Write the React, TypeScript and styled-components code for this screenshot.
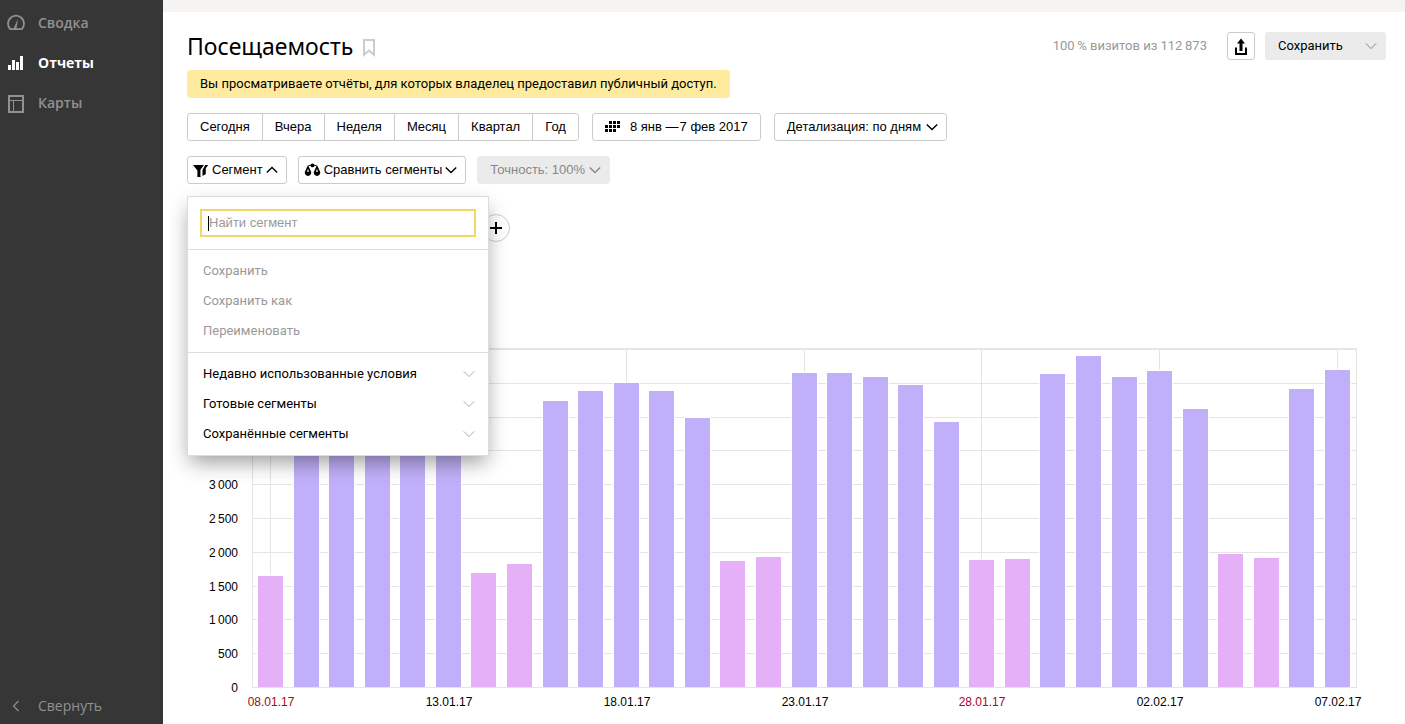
import React, { useLayoutEffect, useRef, useState } from "react";
import styled, { createGlobalStyle, css } from "styled-components";

const uiFont = `"Liberation Sans", Arial, sans-serif`;
const textFont = `Roboto, "Noto Sans", sans-serif`;
const headFont = `"Noto Sans", "Open Sans", sans-serif`;
const navFont = `"Open Sans", "Noto Sans", sans-serif`;

const GlobalStyle = createGlobalStyle`
  *, *::before, *::after { box-sizing: border-box; }
  body { margin: 0; background: #fff; color: #000; font: 13px/16px ${textFont}; }
  button, input, select { font: inherit; color: inherit; margin: 0; }
`;

const Page = styled.div`
  display: flex;
  min-height: 100vh;
`;

const Sidebar = styled.nav`
  flex: 0 0 163px;
  display: flex;
  flex-direction: column;
  padding: 3px 0;
  background: #363636;
`;

const navItem = css<{ $active?: boolean }>`
  display: flex;
  align-items: center;
  gap: 12px;
  height: 40px;
  padding: 0 6px;
  border: 0;
  background: none;
  color: ${(p) => (p.$active ? "#fff" : "#919191")};
  font-family: ${navFont};
  font-size: 14px;
  font-weight: ${(p) => (p.$active ? 700 : 600)};
  text-decoration: none;
  svg { flex: 0 0 20px; }
`;

const NavLink = styled.a<{ $active?: boolean }>`${navItem}`;
const CollapseButton = styled.button<{ $active?: boolean }>`
  ${navItem}
  margin-top: auto;
  height: 30px;
  font-weight: 400;
`;

const Main = styled.main`
  flex: 1;
  min-width: 0;
  border-top: 12px solid #f5f4f2;
  padding: 20px 19px 0 24px;
`;

const Header = styled.header`
  display: flex;
  align-items: center;
  gap: 10px;
  height: 28px;
`;

const Title = styled.h1`
  margin: 0;
  font-family: ${headFont};
  font-size: 23px;
  line-height: 28px;
  font-weight: 400;
`;

const IconButton = styled.button`
  display: flex;
  align-items: center;
  justify-content: center;
  width: 28px;
  height: 28px;
  padding: 0;
  border: 1px solid #ccc;
  border-radius: 3px;
  background: #fff;
`;

const BookmarkButton = styled.button`
  display: flex;
  padding: 4px 0 0;
  border: 0;
  background: none;
`;

const Visits = styled.span`
  margin-left: auto;
  padding-right: 10px;
  color: #999;
`;

const SaveButton = styled.button`
  display: flex;
  align-items: center;
  justify-content: space-between;
  width: 121px;
  height: 28px;
  padding: 0 9px 0 13px;
  border: 0;
  border-radius: 3px;
  background: #ebebeb;
  color: #000;
`;

const Notice = styled.p`
  width: fit-content;
  margin: 10px 0 15px;
  padding: 6px 13px;
  border-radius: 3px;
  background: #ffeba0;
  line-height: 16px;
`;

const Toolbar = styled.div`
  display: flex;
  align-items: center;
  gap: ${(p: { $gap: number }) => p.$gap}px;
  margin-bottom: 15px;
  font-family: ${uiFont};
`;

const ButtonGroup = styled.div`
  display: flex;
  border: 1px solid #ccc;
  border-radius: 3px;
`;

const GroupButton = styled.button`
  height: 26px;
  padding: 0 12px;
  border: 0;
  background: none;
  & + & { border-left: 1px solid #ccc; }
`;

const ToolButton = styled.button<{ $wide?: boolean }>`
  display: flex;
  align-items: center;
  gap: ${(p) => (p.$wide ? 9 : 3)}px;
  height: 28px;
  padding: 0 ${(p) => (p.$wide ? 12 : 8)}px 0 ${(p) => (p.$wide ? 12 : 5)}px;
  border: 1px solid #ccc;
  border-radius: 3px;
  background: #fff;
  white-space: nowrap;
`;

const SelectBox = styled.label`
  position: relative;
  display: flex;
  align-items: center;
  > svg {
    position: absolute;
    right: 9px;
    pointer-events: none;
  }
`;

const Select = styled.select`
  appearance: none;
  height: 28px;
  padding: 0 24px 0 12px;
  border: 1px solid #ccc;
  border-radius: 3px;
  background: #fff;
  &:disabled {
    border-color: #ebebeb;
    background: #ebebeb;
    color: #888;
    opacity: 1;
  }
`;

const MenuAnchor = styled.div`
  position: relative;
`;

const Menu = styled.div`
  position: absolute;
  z-index: 2;
  top: calc(100% + 12px);
  left: 0;
  width: 302px;
  border: 1px solid #ddd;
  background: #fff;
  box-shadow: 0 9px 20px -3px rgba(0, 0, 0, 0.4);
  font-family: ${textFont};
`;

const SearchBox = styled.label`
  position: relative;
  display: block;
  padding: 12px;
`;

const SearchInput = styled.input`
  display: block;
  width: 100%;
  height: 28px;
  padding: 0 7px 2px;
  border: 2px solid #f3d766;
  outline: none;
  background: #fff;
  caret-color: transparent;
  font-family: ${uiFont};
  &::placeholder { color: #999; opacity: 1; }
`;

const Caret = styled.span`
  position: absolute;
  top: 19px;
  left: 20px;
  width: 1px;
  height: 15px;
  background: #000;
`;

const MenuSection = styled.div`
  padding: 6px 0;
  border-top: 1px solid #ddd;
`;

const MenuItem = styled.button`
  display: flex;
  align-items: center;
  justify-content: space-between;
  width: 100%;
  height: 30px;
  padding: 0 13px 0 15px;
  border: 0;
  background: none;
  &:disabled { color: #999; }
`;

const AddRow = styled.div`
  display: flex;
  padding: 15px 0 100px 295px;
`;

const AddButton = styled(IconButton)`
  border-radius: 50%;
`;

const ChartFrame = styled.div`
  display: flex;
  padding: 0 29px 0 0;
  font-family: ${uiFont};
  font-size: 12px;
`;

const YAxis = styled.div`
  display: flex;
  flex-direction: column;
  justify-content: space-between;
  flex: 0 0 65px;
  height: 354px;
  padding-right: 14px;
  text-align: right;
`;

const PlotArea = styled.div`
  flex: 1;
  min-width: 0;
  padding-top: 7px;
  svg { display: block; overflow: visible; }
`;

type ChevronProps = { color?: string; up?: boolean; thin?: boolean };

const Chevron = ({ color = "#000", up, thin }: ChevronProps) => (
  <svg width="12" height="8" viewBox="0 0 12 8" fill="none" stroke={color} strokeWidth={thin ? 1 : 1.4} aria-hidden="true">
    <path d={up ? "M.8 6.6 6 1.4l5.2 5.2" : "M.8 1.4 6 6.6l5.2-5.2"} />
  </svg>
);

const GaugeIcon = () => (
  <svg width="20" height="20" viewBox="0 0 20 20" fill="none" stroke="#919191" strokeWidth="1.8" aria-hidden="true">
    <path d="M4.2 16.2A8 8 0 1 1 15.8 16.2Z" />
    <path d="m12 6-3.9 8.2v2h2.2Z" fill="#919191" stroke="none" />
  </svg>
);

const BarsIcon = () => (
  <svg width="20" height="20" viewBox="0 0 20 20" fill="#fff" aria-hidden="true">
    <path d="M2 12h3v5H2zM6 7h3v10H6zM10 9h3v8h-3zM14 3h3v14h-3z" />
  </svg>
);

const MapIcon = () => (
  <svg width="20" height="20" viewBox="0 0 20 20" fill="none" stroke="#919191" aria-hidden="true">
    <path d="M3 3h14v16H3z" strokeWidth="2" />
    <path d="M3 7.5h14M7.5 7.5V19" />
  </svg>
);

const BackIcon = () => (
  <svg width="20" height="20" viewBox="0 0 20 20" fill="none" stroke="#919191" strokeWidth="1.2" aria-hidden="true">
    <path d="m12.5 5-5 5 5 5" />
  </svg>
);

const BookmarkIcon = () => (
  <svg width="12" height="18" viewBox="0 0 12 18" fill="none" stroke="#ccc" strokeWidth="2" aria-hidden="true">
    <path d="M1 1h10v14.8l-5-4.3-5 4.3Z" />
  </svg>
);

const ShareIcon = () => (
  <svg width="14" height="18" viewBox="0 0 14 18" aria-hidden="true">
    <path d="M2 10.5V17h10v-6.5" fill="none" stroke="#000" strokeWidth="2" />
    <path d="M7 1.5 3 6.5h2.5V14h3V6.5H11Z" />
  </svg>
);

const CalendarIcon = () => (
  <svg width="16" height="12" viewBox="0 0 16 12" aria-hidden="true">
    <path d="M4 0h3v3H4zM8 0h3v3H8zM12 0h3v3h-3zM0 4h3v3H0zM4 4h3v3H4zM8 4h3v3H8zM12 4h3v3h-3zM0 8h3v3H0zM4 8h3v3H4zM8 8h3v3H8z" />
  </svg>
);

const FunnelIcon = () => (
  <svg width="16" height="13" viewBox="0 0 16 13" aria-hidden="true">
    <path d="M0 1h11L7.6 5.6V13H4.4V6.4Z" />
    <path d="M12 1h3.2l-2.4 3.2V10l-3.3 2V6Z" />
    <path d="m11.8 1-3.6 5.2V12" stroke="#fff" strokeWidth=".9" fill="none" />
  </svg>
);

const ScalesIcon = () => (
  <svg width="17" height="14" viewBox="0 0 17 14" aria-hidden="true">
    <circle cx="8.5" cy="2.4" r="1.9" />
    <path d="M4.5 2.8 8.5 1.6l4 1.2" stroke="#000" fill="none" />
    <path fillRule="evenodd" d="M4 2 7 8.6A3.2 3.2 0 1 1 1 8.6ZM4 5.8 3 8.8h2Z" />
    <path fillRule="evenodd" d="M13 2 16 8.6A3.2 3.2 0 1 1 10 8.6ZM13 5.8 12 8.8h2Z" />
  </svg>
);

const PlusIcon = () => (
  <svg width="12" height="12" viewBox="0 0 12 12" stroke="#000" strokeWidth="2" aria-hidden="true">
    <path d="M6 0v12M0 6h12" />
  </svg>
);

const PLOT_HEIGHT = 338;
const MAX_VISITS = 5000;
const BAR_WIDTH = 25;
const EDGE = 18;

const visits = [
  1640, 4420, 4500, 4480, 4390, 4200, 1690, 1825, 4235, 4375, 4500, 4380, 3980, 1865, 1925, 4645,
  4645, 4585, 4470, 3925, 1880, 1895, 4630, 4895, 4585, 4675, 4110, 1970, 1910, 4405, 4690,
];
const dates = ["08.01.17", "13.01.17", "18.01.17", "23.01.17", "28.01.17", "02.02.17", "07.02.17"];
const ticks = ["5\u2009000", "4\u2009500", "4\u2009000", "3\u2009500", "3\u2009000", "2\u2009500", "2\u2009000", "1\u2009500", "1\u2009000", "500", "0"];

const isWeekend = (day: number) => day % 7 === 0 || day % 7 === 6;

const VisitsChart = () => {
  const area = useRef<HTMLDivElement>(null);
  const [width, setWidth] = useState(0);

  useLayoutEffect(() => {
    const node = area.current;
    if (!node) return;
    const measure = () => setWidth(Math.floor(node.clientWidth));
    measure();
    const observer = new ResizeObserver(measure);
    observer.observe(node);
    return () => observer.disconnect();
  }, []);

  const step = (width - 2 - EDGE * 2) / (visits.length - 1);
  const center = (day: number) => Math.round(EDGE + day * step);

  return (
    <ChartFrame>
      <YAxis>
        {ticks.map((tick) => (
          <span key={tick}>{tick}</span>
        ))}
      </YAxis>
      <PlotArea ref={area}>
        {width > 0 && (
          <svg width={width} height="361" role="img" aria-label="Посещаемость по дням">
            <g fill="#e5e5e5">
              {ticks.map((tick, i) => (
                <rect key={tick} x="0" y={Math.round((i * PLOT_HEIGHT) / 10)} width={width} height="1" />
              ))}
              <rect x="0" y="-1" width={width} height="1" />
              <rect x="0" y="0" width="1" height={PLOT_HEIGHT} />
              <rect x={width - 1} y="0" width="1" height={PLOT_HEIGHT} />
              {dates.map((date, i) => (
                <rect key={date} x={center(i * 5)} y="0" width="1" height={PLOT_HEIGHT} />
              ))}
            </g>
            {visits.map((value, day) => {
              const height = Math.round((value / MAX_VISITS) * PLOT_HEIGHT);
              const left = center(day) - (BAR_WIDTH - 1) / 2;
              const top = PLOT_HEIGHT - height;
              return (
                <g key={day}>
                  <rect x={left - 1} y={top - 1} width={BAR_WIDTH + 2} height={height + 1} fill="#fff" />
                  <rect x={left} y={top} width={BAR_WIDTH} height={height} fill={isWeekend(day) ? "#e6b0f8" : "#c0b0f9"} />
                </g>
              );
            })}
            {dates.map((date, i) => (
              <text key={date} x={center(i * 5) + 1} y="357" textAnchor="middle" fill={isWeekend(i * 5) ? "#a8071a" : "#000"}>
                {date}
              </text>
            ))}
          </svg>
        )}
      </PlotArea>
    </ChartFrame>
  );
};

const periods = ["Сегодня", "Вчера", "Неделя", "Месяц", "Квартал", "Год"];
const actions = ["Сохранить", "Сохранить как", "Переименовать"];
const groups = ["Недавно использованные условия", "Готовые сегменты", "Сохранённые сегменты"];

const SegmentMenu = () => (
  <Menu>
    <SearchBox>
      <SearchInput type="text" placeholder="Найти сегмент" aria-label="Найти сегмент" />
      <Caret />
    </SearchBox>
    <MenuSection>
      {actions.map((name) => (
        <MenuItem key={name} disabled>{name}</MenuItem>
      ))}
    </MenuSection>
    <MenuSection>
      {groups.map((name) => (
        <MenuItem key={name}>
          {name}
          <Chevron color="#aaa" thin />
        </MenuItem>
      ))}
    </MenuSection>
  </Menu>
);

export default function App() {
  return (
    <>
      <GlobalStyle />
      <Page>
        <Sidebar>
          <NavLink href="#summary"><GaugeIcon />Сводка</NavLink>
          <NavLink href="#reports" $active><BarsIcon />Отчеты</NavLink>
          <NavLink href="#maps"><MapIcon />Карты</NavLink>
          <CollapseButton><BackIcon />Свернуть</CollapseButton>
        </Sidebar>
        <Main>
          <Header>
            <Title>Посещаемость</Title>
            <BookmarkButton aria-label="В избранное"><BookmarkIcon /></BookmarkButton>
            <Visits>{"100\u2009% визитов из 112\u2009873"}</Visits>
            <IconButton aria-label="Экспорт"><ShareIcon /></IconButton>
            <SaveButton>Сохранить<Chevron color="#888" thin /></SaveButton>
          </Header>
          <Notice>Вы просматриваете отчёты, для которых владелец предоставил публичный доступ.</Notice>
          <Toolbar $gap={13}>
            <ButtonGroup>
              {periods.map((name) => (
                <GroupButton key={name}>{name}</GroupButton>
              ))}
            </ButtonGroup>
            <ToolButton $wide><CalendarIcon />{"8 янв —\u200a7 фев 2017"}</ToolButton>
            <SelectBox>
              <Select aria-label="Детализация">
                <option>Детализация: по дням</option>
              </Select>
              <Chevron />
            </SelectBox>
          </Toolbar>
          <Toolbar $gap={11}>
            <MenuAnchor>
              <ToolButton aria-expanded="true"><FunnelIcon />Сегмент<Chevron up /></ToolButton>
              <SegmentMenu />
            </MenuAnchor>
            <ToolButton><ScalesIcon />Сравнить сегменты<Chevron /></ToolButton>
            <SelectBox>
              <Select aria-label="Точность" disabled>
                <option>Точность: 100%</option>
              </Select>
              <Chevron color="#888" />
            </SelectBox>
          </Toolbar>
          <AddRow>
            <AddButton aria-label="Добавить условие"><PlusIcon /></AddButton>
          </AddRow>
          <VisitsChart />
        </Main>
      </Page>
    </>
  );
}
